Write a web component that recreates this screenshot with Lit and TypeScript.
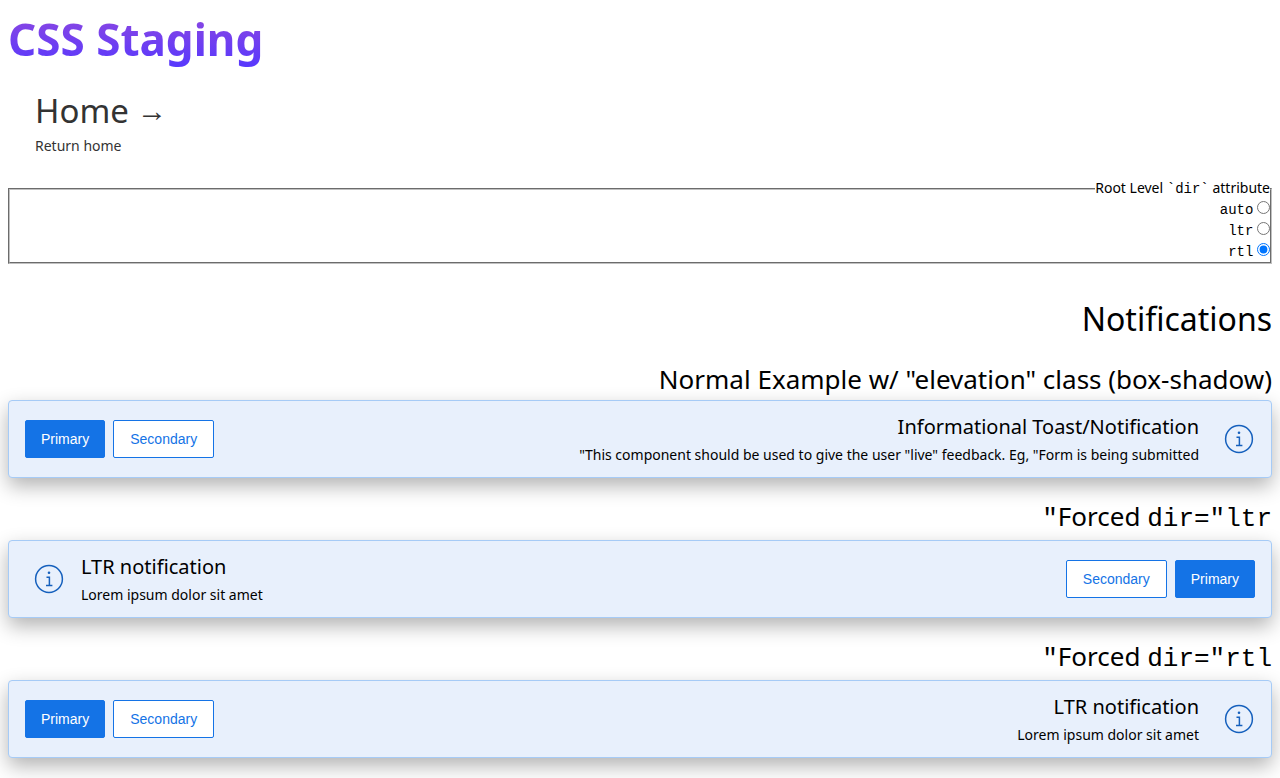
import { LitElement, html, css } from "lit";
import { customElement, property, state } from "lit/decorators.js";

@customElement("toast-notification")
export class ToastNotification extends LitElement {
  @property() heading = "";
  @property() message = "";

  static styles = css`
    :host {
      display: block;
    }
    .toast {
      display: flex;
      align-items: center;
      gap: 16px;
      box-sizing: border-box;
      min-height: 78px;
      padding: 8px 16px;
      border: 1px solid #a6cbf6;
      border-radius: 4px;
      background: #e8f0fc;
      box-shadow: 0 8px 20px rgba(0, 0, 0, 0.3);
    }
    .icon {
      flex: none;
      width: 32px;
      height: 32px;
      margin-left: 8px;
      fill: none;
      stroke: #1560bd;
    }
    .dot {
      fill: #1560bd;
      stroke: none;
    }
    .body {
      flex: 1;
    }
    .heading {
      font-size: 20px;
      line-height: 28px;
    }
    .message {
      margin: 3px 0 0;
      font-size: 14px;
      line-height: 21px;
    }
    .actions {
      display: flex;
      flex-direction: row-reverse;
      gap: 8px;
    }
    .button {
      padding: 0 16px;
      height: 38px;
      border: 1px solid #1473e6;
      border-radius: 2px;
      background: #fff;
      color: #1473e6;
      font: 14px "Liberation Sans", sans-serif;
    }
    .primary {
      padding: 0 15px;
      background: #1473e6;
      color: #fff;
    }
  `;

  render() {
    return html`
      <div class="toast" role="status">
        <svg class="icon" viewBox="0 0 32 32" aria-hidden="true">
          <circle cx="16" cy="16" r="13.4" stroke-width="1.5" />
          <circle class="dot" cx="16" cy="9.7" r="1.3" />
          <path d="M13.5 14.2H16.4V22.4M13 22.5H19.4" stroke-width="1.5" />
        </svg>
        <div class="body">
          <div class="heading">${this.heading}</div>
          <p class="message">${this.message}</p>
        </div>
        <div class="actions">
          <button class="button primary">Primary</button>
          <button class="button">Secondary</button>
        </div>
      </div>
    `;
  }
}

@customElement("app-root")
export class AppRoot extends LitElement {
  @state() direction = "rtl";

  static styles = css`
    :host {
      display: block;
      padding: 8px 8px 20px;
      background: #fff;
      color: #000;
      font: 14px/21px "Noto Sans", sans-serif;
    }
    code {
      font-family: "Liberation Mono", monospace;
    }
    .title {
      width: fit-content;
      margin: 0;
      font-size: 44px;
      line-height: 62px;
      font-weight: 700;
      color: transparent;
      background: linear-gradient(#9249de, #5437ff);
      background-clip: text;
      -webkit-background-clip: text;
    }
    .home {
      display: block;
      width: fit-content;
      margin: 16px 0 22px;
      padding: 0 27px;
      color: #333;
      text-decoration: none;
    }
    .home-title {
      display: flex;
      align-items: center;
      gap: 8px;
      font-size: 33px;
      line-height: 49px;
    }
    .arrow {
      font-family: "Liberation Sans", sans-serif;
      font-size: 30px;
    }
    .options {
      margin: 0;
      padding: 0;
      border: 2px groove #c0c0c0;
      line-height: 19px;
    }
    .legend {
      padding: 0;
    }
    .option {
      display: block;
    }
    .radio {
      margin: 0;
    }
    .section {
      margin: 35px 0 20px;
      font-size: 32px;
      line-height: 39px;
      font-weight: 400;
    }
    .example {
      margin: 17px 0 0;
      font-size: 26px;
      line-height: 42px;
      font-weight: 400;
      text-align: right;
    }
  `;

  private renderOption(value: string) {
    return html`<label class="option">
      <input
        class="radio"
        type="radio"
        name="dir"
        .checked=${this.direction === value}
        @change=${() => (this.direction = value)}
      />
      <code>${value}</code>
    </label>`;
  }

  render() {
    return html`
      <h1 class="title">CSS Staging</h1>
      <a class="home" href="#">
        <span class="home-title">Home <span class="arrow">→</span></span>
        Return home
      </a>
      <main dir=${this.direction}>
        <fieldset class="options">
          <legend class="legend">Root Level <code>\`dir\`</code> attribute</legend>
          ${["auto", "ltr", "rtl"].map((value) => this.renderOption(value))}
        </fieldset>
        <h2 class="section">Notifications</h2>
        <h3 class="example" dir="ltr">Normal Example w/ "elevation" class (box-shadow)</h3>
        <toast-notification
          heading="Informational Toast/Notification"
          message='This component should be used to give the user "live" feedback. Eg, "Form is being submitted"'
        ></toast-notification>
        <h3 class="example">Forced <code>dir="ltr"</code></h3>
        <toast-notification
          dir="ltr"
          heading="LTR notification"
          message="Lorem ipsum dolor sit amet"
        ></toast-notification>
        <h3 class="example">Forced <code>dir="rtl"</code></h3>
        <toast-notification
          dir="rtl"
          heading="LTR notification"
          message="Lorem ipsum dolor sit amet"
        ></toast-notification>
      </main>
    `;
  }
}
